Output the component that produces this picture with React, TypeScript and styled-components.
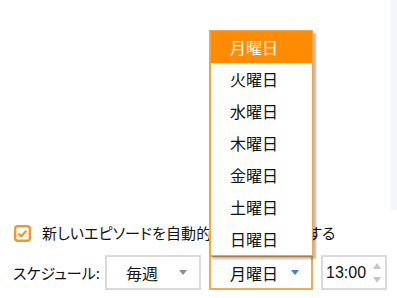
import styled, { createGlobalStyle } from "styled-components";

const days = ["月曜日", "火曜日", "水曜日", "木曜日", "金曜日", "土曜日", "日曜日"];

const GlobalStyle = createGlobalStyle`
    body {
        margin: 0;
        background: #ffffff;
        font-family: "Noto Sans CJK JP", "Noto Sans", sans-serif;
        font-feature-settings: "palt";
        color: #111111;
    }
`;

const App = () => {
    const selected = 0;

    return (
        <Page>
            <GlobalStyle />
            <TopArea>
                <SideStrip />
            </TopArea>
            <Settings>
                <CheckRow>
                    <CheckBox>
                        <svg width="17" height="17" viewBox="0 0 17 17">
                            <rect x="1.2" y="1.2" width="14.6" height="14.6" rx="2.5" fill="#fff" stroke="#f0982a" strokeWidth="2.4" />
                            <path d="M4.4 8.6 L7.3 11.2 L12.4 5.8" fill="none" stroke="#f0982a" strokeWidth="2.3" />
                        </svg>
                    </CheckBox>
                    <CheckLabel>新しいエピソードを自動的にダウンロードする</CheckLabel>
                </CheckRow>
                <ScheduleRow>
                    <Label>スケジュール:</Label>
                    <Select $width={96}>
                        <SelectText>毎週</SelectText>
                        <Caret $color="#8f8f9c" />
                    </Select>
                    <SelectWrap>
                        <Popup>
                            {days.map((d, i) => (
                                <Option key={d} $active={i === selected}>{d}</Option>
                            ))}
                        </Popup>
                        <Select $width={104} $open>
                            <SelectText>{days[selected]}</SelectText>
                            <Caret $color="#3c82d8" />
                        </Select>
                    </SelectWrap>
                    <TimeBox>
                        <TimeText>13:00</TimeText>
                        <Spinner>
                            <svg width="10" height="24" viewBox="0 0 10 24">
                                <path d="M1 8 L5 2 L9 8 Z" fill="#c6c6c6" />
                                <path d="M1 16 L5 22 L9 16 Z" fill="#c6c6c6" />
                            </svg>
                        </Spinner>
                    </TimeBox>
                </ScheduleRow>
            </Settings>
        </Page>
    );
};

const Page = styled.div`
    display: flex;
    flex-direction: column;
    width: 397px;
    height: 298px;
    overflow: hidden;
`;

const TopArea = styled.div`
    flex: 1;
    display: flex;
    justify-content: flex-end;
    align-items: flex-start;
`;

const SideStrip = styled.div`
    width: 6px;
    height: 210px;
    background: #f5f6f9;
`;

const Settings = styled.div`
    display: flex;
    flex-direction: column;
    gap: 14px;
    padding: 0 0 8px 13px;
`;

const CheckRow = styled.div`
    display: flex;
    align-items: center;
    height: 16px;
`;

const CheckBox = styled.div`
    width: 17px;
    height: 17px;
    margin-left: 1px;
    margin-right: 11px;
    display: flex;
    svg {
        display: block;
    }
`;

const CheckLabel = styled.span`
    font-size: 15px;
    letter-spacing: 0.1px;
    white-space: nowrap;
    line-height: 16px;
`;

const ScheduleRow = styled.div`
    display: flex;
    align-items: center;
    gap: 8px;
    height: 35px;
`;

const Label = styled.span`
    width: 84px;
    font-size: 15px;
    white-space: nowrap;
`;

const SelectWrap = styled.div`
    position: relative;
    display: flex;
`;

const Select = styled.div<{ $width: number; $open?: boolean }>`
    box-sizing: border-box;
    width: ${(p) => p.$width}px;
    height: 35px;
    border: 2px solid ${(p) => (p.$open ? "#f5aa52" : "#dadada")};
    background: #fff;
    display: flex;
    align-items: center;
    padding: 0 12px 0 19px;
    justify-content: space-between;
`;

const SelectText = styled.span`
    font-size: 16px;
`;

const Caret = styled.span<{ $color: string }>`
    width: 0;
    height: 0;
    border-left: 4px solid transparent;
    border-right: 4px solid transparent;
    border-top: 5px solid ${(p) => p.$color};
`;

const Popup = styled.div`
    position: absolute;
    left: 0;
    bottom: 34px;
    box-sizing: border-box;
    width: 104px;
    border: 1px solid #f5a540;
    border-left-width: 2px;
    background: #fff;
    box-shadow: 3px 3px 2px rgba(0, 0, 0, 0.28);
    z-index: 2;
`;

const Option = styled.div<{ $active?: boolean }>`
    height: 32px;
    display: flex;
    align-items: center;
    padding-left: 19px;
    font-size: 16px;
    background: ${(p) => (p.$active ? "#ff8c00" : "#fff")};
    color: ${(p) => (p.$active ? "#fff" : "#111")};
`;

const TimeBox = styled.div`
    box-sizing: border-box;
    width: 66px;
    height: 35px;
    border: 2px solid #dadada;
    display: flex;
    align-items: center;
    justify-content: space-between;
    padding: 0 3px 0 3px;
`;

const TimeText = styled.span`
    font-family: "Liberation Sans", Arial, sans-serif;
    font-size: 16px;
`;

const Spinner = styled.div`
    display: flex;
    svg {
        display: block;
    }
`;

export default App;
